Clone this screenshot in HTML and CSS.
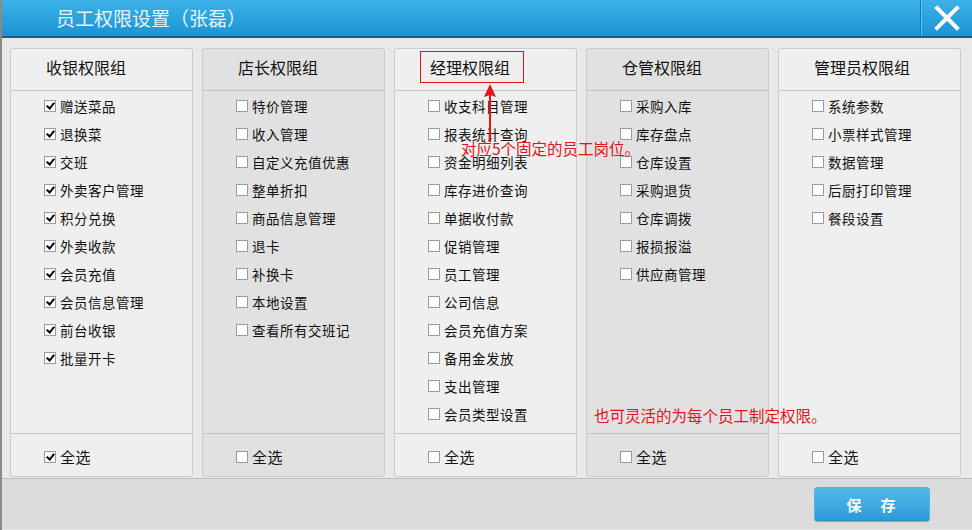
FILE: index.html
```html
<!DOCTYPE html>
<html lang="zh-CN">
<head>
    <meta charset="UTF-8">
    <title>员工权限设置</title>
    <link rel="stylesheet" href="styles.css">
</head>
<body>

<div class="window">
    <div class="titlebar">
        <span class="title">员工权限设置（张磊）</span>
        <button class="close" aria-label="关闭">
            <svg width="26" height="26" viewBox="0 0 26 26">
                <path d="M3 3 L23 23 M23 3 L3 23" stroke="#fff" stroke-width="4" stroke-linecap="square"/>
            </svg>
        </button>
    </div>

    <div class="panels">
        <div class="panel light">
            <div class="panel-head">收银权限组</div>
            <ul class="perm-list">
                <li><span class="cb on"></span>赠送菜品</li>
                <li><span class="cb on"></span>退换菜</li>
                <li><span class="cb on"></span>交班</li>
                <li><span class="cb on"></span>外卖客户管理</li>
                <li><span class="cb on"></span>积分兑换</li>
                <li><span class="cb on"></span>外卖收款</li>
                <li><span class="cb on"></span>会员充值</li>
                <li><span class="cb on"></span>会员信息管理</li>
                <li><span class="cb on"></span>前台收银</li>
                <li><span class="cb on"></span>批量开卡</li>
            </ul>
            <div class="panel-foot"><span class="cb on"></span>全选</div>
        </div>

        <div class="panel dark">
            <div class="panel-head">店长权限组</div>
            <ul class="perm-list">
                <li><span class="cb"></span>特价管理</li>
                <li><span class="cb"></span>收入管理</li>
                <li><span class="cb"></span>自定义充值优惠</li>
                <li><span class="cb"></span>整单折扣</li>
                <li><span class="cb"></span>商品信息管理</li>
                <li><span class="cb"></span>退卡</li>
                <li><span class="cb"></span>补换卡</li>
                <li><span class="cb"></span>本地设置</li>
                <li><span class="cb"></span>查看所有交班记</li>
            </ul>
            <div class="panel-foot"><span class="cb"></span>全选</div>
        </div>

        <div class="panel light">
            <div class="panel-head"><span class="marked">经理权限组</span></div>
            <ul class="perm-list">
                <li><span class="cb"></span>收支科目管理</li>
                <li><span class="cb"></span>报表统计查询</li>
                <li><span class="cb"></span>资金明细列表</li>
                <li><span class="cb"></span>库存进价查询</li>
                <li><span class="cb"></span>单据收付款</li>
                <li><span class="cb"></span>促销管理</li>
                <li><span class="cb"></span>员工管理</li>
                <li><span class="cb"></span>公司信息</li>
                <li><span class="cb"></span>会员充值方案</li>
                <li><span class="cb"></span>备用金发放</li>
                <li><span class="cb"></span>支出管理</li>
                <li><span class="cb"></span>会员类型设置</li>
            </ul>
            <div class="panel-foot"><span class="cb"></span>全选</div>
        </div>

        <div class="panel dark">
            <div class="panel-head">仓管权限组</div>
            <ul class="perm-list">
                <li><span class="cb"></span>采购入库</li>
                <li><span class="cb"></span>库存盘点</li>
                <li><span class="cb"></span>仓库设置</li>
                <li><span class="cb"></span>采购退货</li>
                <li><span class="cb"></span>仓库调拨</li>
                <li><span class="cb"></span>报损报溢</li>
                <li><span class="cb"></span>供应商管理</li>
            </ul>
            <div class="panel-foot"><span class="cb"></span>全选</div>
        </div>

        <div class="panel light">
            <div class="panel-head">管理员权限组</div>
            <ul class="perm-list">
                <li><span class="cb"></span>系统参数</li>
                <li><span class="cb"></span>小票样式管理</li>
                <li><span class="cb"></span>数据管理</li>
                <li><span class="cb"></span>后厨打印管理</li>
                <li><span class="cb"></span>餐段设置</li>
            </ul>
            <div class="panel-foot"><span class="cb"></span>全选</div>
        </div>
    </div>

    <div class="bottombar">
        <button class="save">保　存</button>
    </div>

    <!-- annotations drawn over the screenshot -->
    <svg class="note-arrow" width="14" height="58" viewBox="0 0 14 58">
        <path d="M7 10 L7 58" stroke="#e0141a" stroke-width="2"/>
        <path d="M7 0 L13 13 L7 11 L1 13 Z" fill="#e0141a"/>
    </svg>
    <div class="note note-a">对应5个固定的员工岗位。</div>
    <div class="note note-b">也可灵活的为每个员工制定权限。</div>
</div>

</body>
</html>
```

FILE: styles.css
```css
body {
    margin: 0;
    font-family: "Noto Sans CJK SC", "DejaVu Sans", sans-serif;
    color: #111;
    background-color: #e9e9e9;
}
.window {
    position: relative;
    width: 972px;
    height: 530px;
    overflow: hidden;
    background-color: #e9e9e9;
    box-sizing: border-box;
    border-left: 2px solid #8a8a8a;
}
.titlebar {
    height: 36px;
    margin-left: -2px;
    display: flex;
    align-items: center;
    justify-content: space-between;
    background: linear-gradient(to bottom, #3cb2e8, #1d93d3);
    border-bottom: 2px solid #145f8f;
}
.title {
    margin-left: 56px;
    margin-top: -2px;
    font-size: 19px;
    color: #e2f4fc;
}
.close {
    width: 52px;
    height: 36px;
    padding: 0;
    border: none;
    border-left: 1px solid #1b77ad;
    box-shadow: inset 1px 0 0 #5cc2ee;
    background: transparent;
    display: flex;
    align-items: center;
    justify-content: center;
    cursor: pointer;
}
.panels {
    display: flex;
    gap: 9px;
    padding: 10px 0 0 8px;
    height: 429px;
}
.panel {
    width: 183px;
    box-sizing: border-box;
    display: flex;
    flex-direction: column;
    border: 1px solid #cbcbcb;
    border-radius: 3px;
}
.panel.light {
    background-color: #efefef;
}
.panel.dark {
    background-color: #e1e1e1;
}
.panel-head {
    height: 42px;
    box-sizing: border-box;
    padding: 0 0 5px 35px;
    display: flex;
    align-items: center;
    font-size: 16px;
    border-bottom: 1px solid #c4c4c4;
}
.marked {
    margin-left: -10px;
    padding: 0 13px 0 9px;
    height: 30px;
    line-height: 30px;
    border: 1px solid #e0141a;
}
.perm-list {
    list-style: none;
    margin: 0;
    padding: 1px 0 0 33px;
    flex: 1;
    border-bottom: 1px solid #c4c4c4;
}
.perm-list li,
.panel-foot {
    height: 28px;
    display: flex;
    align-items: center;
    font-size: 13.5px;
    letter-spacing: 0.5px;
}
.panel-foot {
    height: 42px;
    padding: 3px 0 0 33px;
    box-sizing: border-box;
    font-size: 15px;
}
.cb {
    width: 10px;
    height: 10px;
    margin-right: 4px;
    border: 1px solid #9c9c9c;
    background-color: #fff;
    position: relative;
    flex-shrink: 0;
}
.cb.on::after {
    content: "";
    position: absolute;
    left: 3px;
    top: 0px;
    width: 3px;
    height: 6px;
    border: solid #000;
    border-width: 0 2px 2px 0;
    transform: rotate(40deg);
}
.bottombar {
    margin-top: 1px;
    height: 51px;
    box-sizing: border-box;
    border-top: 1px solid #bdbdbd;
    background-color: #dcdcdc;
    display: flex;
    align-items: center;
    justify-content: flex-end;
    padding-right: 42px;
}
.save {
    width: 116px;
    height: 35px;
    border: 1px solid #54b3e2;
    border-radius: 3px;
    background: linear-gradient(to bottom, #55b9e8, #2b9ad6);
    color: #fff;
    font-family: "Noto Sans CJK SC", sans-serif;
    font-size: 15px;
    font-weight: bold;
    letter-spacing: 2px;
    cursor: pointer;
}
.note-arrow {
    position: absolute;
    left: 481px;
    top: 84px;
}
.note {
    position: absolute;
    color: #e0141a;
    font-size: 15.5px;
    white-space: nowrap;
}
.note-a {
    left: 459px;
    top: 137px;
}
.note-b {
    left: 592px;
    top: 404px;
}
```
